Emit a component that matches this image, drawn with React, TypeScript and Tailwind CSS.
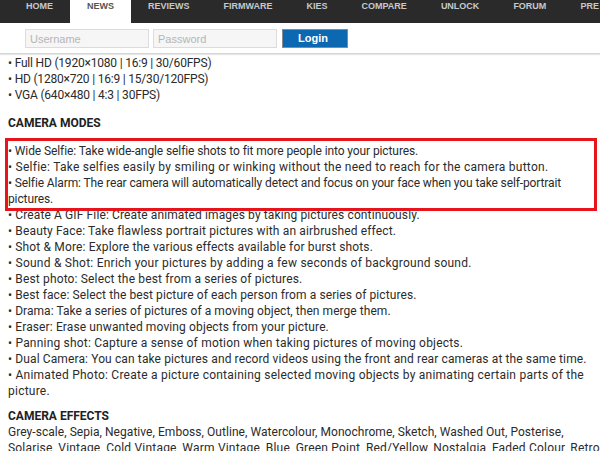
const navItems = ["HOME", "NEWS", "REVIEWS", "FIRMWARE", "KIES", "COMPARE", "UNLOCK", "FORUM", "PRE"];

type Line = { t: string; c: string };

const resolutions: Line[] = [
  { t: "Full HD (1920×1080 | 16:9 | 30/60FPS)", c: "tracking-[-0.2px]" },
  { t: "HD (1280×720 | 16:9 | 15/30/120FPS)", c: "tracking-[-0.2px]" },
  { t: "VGA (640×480 | 4:3 | 30FPS)", c: "tracking-[-0.2px]" },
];

const highlighted: Line[] = [
  { t: "Wide Selfie: Take wide-angle selfie shots to fit more people into your pictures.", c: "tracking-[-0.1px]" },
  { t: "Selfie: Take selfies easily by smiling or winking without the need to reach for the camera button.", c: "tracking-[0.26px]" },
  { t: "Selfie Alarm: The rear camera will automatically detect and focus on your face when you take self-portrait pictures.", c: "tracking-[-0.12px]" },
];

const modes: Line[] = [
  { t: "Create A GIF File: Create animated images by taking pictures continuously.", c: "tracking-[0.12px]" },
  { t: "Beauty Face: Take flawless portrait pictures with an airbrushed effect.", c: "tracking-[0.15px]" },
  { t: "Shot & More: Explore the various effects available for burst shots.", c: "tracking-[0.15px]" },
  { t: "Sound & Shot: Enrich your pictures by adding a few seconds of background sound.", c: "tracking-[0.24px]" },
  { t: "Best photo: Select the best from a series of pictures.", c: "tracking-[0.15px]" },
  { t: "Best face: Select the best picture of each person from a series of pictures.", c: "tracking-[0.1px]" },
  { t: "Drama: Take a series of pictures of a moving object, then merge them.", c: "tracking-[0.05px]" },
  { t: "Eraser: Erase unwanted moving objects from your picture.", c: "tracking-[0.12px]" },
  { t: "Panning shot: Capture a sense of motion when taking pictures of moving objects.", c: "tracking-[0.2px]" },
  { t: "Dual Camera: You can take pictures and record videos using the front and rear cameras at the same time.", c: "tracking-[0.12px]" },
  { t: "Animated Photo: Create a picture containing selected moving objects by animating certain parts of the picture.", c: "tracking-[0.24px]" },
];

function Bullet({ line }: { line: Line }) {
  return <div className={line.c}>• {line.t}</div>;
}

export default function App() {
  return (
    <div className="w-[600px] h-[451px] overflow-hidden bg-white">
      {/* top nav */}
      <div className="h-[23px] bg-[#2a2a2a] flex pl-[9px] font-['Liberation_Sans',Arial,sans-serif] text-[9px] leading-[11px] font-bold whitespace-nowrap">
        {navItems.map((label) => (
          <div
            key={label}
            className={
              "h-full flex-none px-[17px] pt-[1px] " +
              (label === "NEWS" ? "bg-white text-[#555]" : "text-[#c6c9cd]")
            }
          >
            {label}
          </div>
        ))}
      </div>

      {/* login row */}
      <div className="h-[31px] flex items-start gap-1 pl-[25px] pt-[6px] border-b border-[#d6d6d6] shadow-[0_1px_1px_#e6e6e6] font-['Liberation_Sans',Arial,sans-serif]">
        <input
          className="w-[124px] h-[19px] border border-[#dcdcdc] bg-[#f6f6f6] px-1 text-[11px] placeholder-[#b5b5b5] outline-none"
          placeholder="Username"
        />
        <input
          className="w-[124px] h-[19px] border border-[#dcdcdc] bg-[#f6f6f6] px-1 text-[11px] placeholder-[#b5b5b5] outline-none"
          placeholder="Password"
          type="password"
        />
        <button className="ml-[1px] w-[66px] h-[19px] bg-[#0c68b0] border border-[#8a8a8a] text-white text-[11px] font-bold text-left pl-[15px]">
          Login
        </button>
      </div>

      {/* article */}
      <div className="pl-2 pr-[6px] pt-[1px] font-['Roboto',sans-serif] text-[12px] leading-[16px] text-[#2b2b2b]">
        {resolutions.map((r) => (
          <Bullet key={r.t} line={r} />
        ))}

        <div className="mt-[12px] font-bold text-[#222]">CAMERA MODES</div>

        <div className="relative mt-[12px]">
          <div className="absolute -left-[3px] -right-[3px] -top-[5px] -bottom-[4px] border-[3px] border-[#e8141c] pointer-events-none" />
          {highlighted.map((t) => (
            <Bullet key={t.t} line={t} />
          ))}
        </div>
        {modes.map((t) => (
          <Bullet key={t.t} line={t} />
        ))}

        <div className="mt-[9px] font-bold text-[#222]">CAMERA EFFECTS</div>
        <div className="whitespace-nowrap">
          <div className="tracking-[0.05px]">
            Grey-scale, Sepia, Negative, Emboss, Outline, Watercolour, Monochrome, Sketch, Washed Out, Posterise,
          </div>
          <div className="tracking-[0.2px]">
            Solarise, Vintage, Cold Vintage, Warm Vintage, Blue, Green Point, Red/Yellow, Nostalgia, Faded Colour, Retro
          </div>
        </div>
      </div>
    </div>
  );
}
